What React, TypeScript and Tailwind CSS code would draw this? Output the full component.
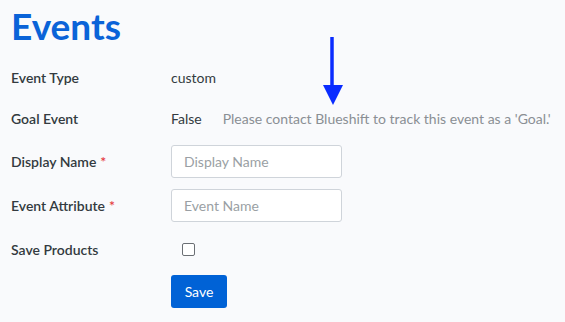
import React from 'react';

const Label = ({ text, required }: { text: string; required?: boolean }) => (
  <div className="w-[160px] shrink-0 text-[14px] font-semibold text-[#333a40]">
    {text}
    {required && <span className="ml-1 text-[#e5393e]">*</span>}
  </div>
);

export default function App() {
  return (
    <div className="relative min-h-[322px] w-full bg-[#f9fafc] pl-[11px] font-['Lato','Open_Sans',sans-serif] text-[14px] text-[#333a40]">
      {/* Title */}
      <h1 className="pt-[6px] text-[37px] font-bold leading-[40px] text-[#0a63d8]">Events</h1>

      {/* Event type */}
      <div className="mt-[21px] flex h-[20px] items-center">
        <Label text="Event Type" />
        <span>custom</span>
      </div>

      {/* Goal event */}
      <div className="mt-[21px] flex h-[20px] items-center">
        <Label text="Goal Event" />
        <span>False</span>
        <span className="ml-[21px] text-[#8a8f94]">Please contact Blueshift to track this event as a 'Goal.'</span>
      </div>

      {/* Display name */}
      <div className="mt-[17px] flex items-center">
        <Label text="Display Name" required />
        <input
          placeholder="Display Name"
          className="h-[33px] w-[171px] rounded-[3px] border border-[#cfd4da] bg-white px-[12px] text-[14px] text-[#333a40] outline-none placeholder:text-[#9a9fa4]"
        />
      </div>

      {/* Event attribute */}
      <div className="mt-[11px] flex items-center">
        <Label text="Event Attribute" required />
        <input
          placeholder="Event Name"
          className="h-[33px] w-[171px] rounded-[3px] border border-[#cfd4da] bg-white px-[12px] text-[14px] text-[#333a40] outline-none placeholder:text-[#9a9fa4]"
        />
      </div>

      {/* Save products */}
      <div className="mt-[17px] flex h-[20px] items-center">
        <Label text="Save Products" />
        <span className="ml-[11px] block h-[13px] w-[13px] rounded-[2px] border border-[#6b6f74] bg-white" />
      </div>

      <div className="mt-[16px] pl-[160px]">
        <button className="h-[33px] w-[56px] rounded-[3px] bg-[#0062d6] text-[14px] text-white">Save</button>
      </div>

      {/* Annotation arrow */}
      <svg className="absolute left-[322px] top-[36px]" width="22" height="70" viewBox="0 0 22 70">
        <line x1="10" y1="1" x2="10" y2="52" stroke="#0a2cff" strokeWidth="3.5" />
        <polygon points="1,49 21,49 11,69" fill="#0a2cff" />
      </svg>
    </div>
  );
}
